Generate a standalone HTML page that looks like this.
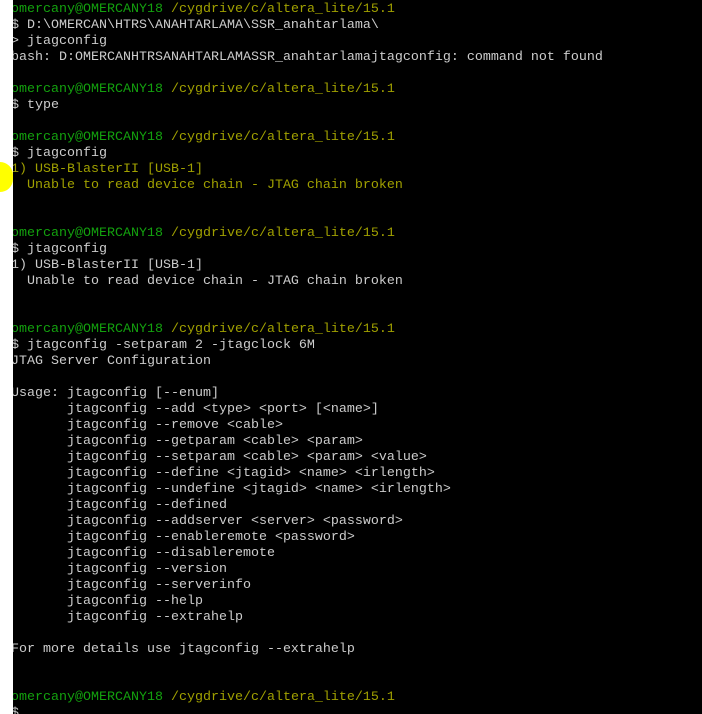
<html><head><style>
body{margin:0;width:702px;height:714px;background:#fff;overflow:hidden;position:relative}
#t{position:absolute;left:13px;top:0;width:689px;height:714px;background:#000;overflow:hidden}
pre{margin:0;position:absolute;left:-2px;top:2px;font-family:"Liberation Mono",monospace;font-size:13.33px;line-height:16px;color:#cccccc}
.g{color:#13a10e}.y{color:#a0a000}
#blob{position:absolute;left:0;top:162px;width:13px;height:30px;background:#ffff00;border-radius:0 15px 15px 0}
</style></head><body>
<div id="blob"></div>
<div id="t"><pre><span class="g">omercany@OMERCANY18</span> <span class="y">/cygdrive/c/altera_lite/15.1</span>
$ D:\OMERCAN\HTRS\ANAHTARLAMA\SSR_anahtarlama\
&gt; jtagconfig
bash: D:OMERCANHTRSANAHTARLAMASSR_anahtarlamajtagconfig: command not found

<span class="g">omercany@OMERCANY18</span> <span class="y">/cygdrive/c/altera_lite/15.1</span>
$ type

<span class="g">omercany@OMERCANY18</span> <span class="y">/cygdrive/c/altera_lite/15.1</span>
$ jtagconfig
<span class="y">1) USB-BlasterII [USB-1]
  Unable to read device chain - JTAG chain broken</span>


<span class="g">omercany@OMERCANY18</span> <span class="y">/cygdrive/c/altera_lite/15.1</span>
$ jtagconfig
1) USB-BlasterII [USB-1]
  Unable to read device chain - JTAG chain broken


<span class="g">omercany@OMERCANY18</span> <span class="y">/cygdrive/c/altera_lite/15.1</span>
$ jtagconfig -setparam 2 -jtagclock 6M
JTAG Server Configuration

Usage: jtagconfig [--enum]
       jtagconfig --add &lt;type&gt; &lt;port&gt; [&lt;name&gt;]
       jtagconfig --remove &lt;cable&gt;
       jtagconfig --getparam &lt;cable&gt; &lt;param&gt;
       jtagconfig --setparam &lt;cable&gt; &lt;param&gt; &lt;value&gt;
       jtagconfig --define &lt;jtagid&gt; &lt;name&gt; &lt;irlength&gt;
       jtagconfig --undefine &lt;jtagid&gt; &lt;name&gt; &lt;irlength&gt;
       jtagconfig --defined
       jtagconfig --addserver &lt;server&gt; &lt;password&gt;
       jtagconfig --enableremote &lt;password&gt;
       jtagconfig --disableremote
       jtagconfig --version
       jtagconfig --serverinfo
       jtagconfig --help
       jtagconfig --extrahelp

For more details use jtagconfig --extrahelp


<span class="g">omercany@OMERCANY18</span> <span class="y">/cygdrive/c/altera_lite/15.1</span>
$
</pre></div>
</body></html>
